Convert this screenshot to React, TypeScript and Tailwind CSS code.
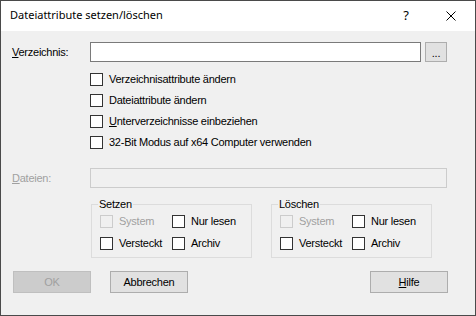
import React from 'react';

function Box({ disabled = false }: { disabled?: boolean }) {
  return (
    <span
      className={
        'inline-block w-[13px] h-[13px] shrink-0 border ' +
        (disabled ? 'border-[#cccccc] bg-[#f0f0f0]' : 'border-[#333333] bg-white')
      }
    />
  );
}

function Check({ label, disabled = false }: { label: React.ReactNode; disabled?: boolean }) {
  return (
    <div className="flex items-center h-[13px]">
      <Box disabled={disabled} />
      <span className={'ml-[6px] leading-none ' + (disabled ? 'text-[#a0a0a0]' : 'text-black')}>{label}</span>
    </div>
  );
}

function Gruppe({ title }: { title: string }) {
  return (
    <div className="relative w-[161px] h-[54px] border border-[#dcdcdc]">
      <span className="absolute -top-[8px] left-[6px] px-[1px] bg-[#f0f0f0] leading-[14px]">{title}</span>
      <div className="grid grid-cols-[72px_1fr] gap-y-[9px] pl-[8px] pt-[10px]">
        <Check label="System" disabled />
        <Check label="Nur lesen" />
        <Check label="Versteckt" />
        <Check label="Archiv" />
      </div>
    </div>
  );
}

export default function App() {
  return (
    <div className="w-[476px] h-[316px] border border-[#4a4a4a] bg-[#f0f0f0] flex flex-col text-[11px] tracking-[-0.25px] text-black font-['Liberation_Sans',Arial,sans-serif]">
      {/* Titelleiste */}
      <div className="h-[30px] bg-white flex items-center shrink-0 tracking-normal">
        <span className="pl-[9px] pb-[1px] text-[11px] font-['Noto_Sans',sans-serif]">Dateiattribute setzen/löschen</span>
        <span className="ml-auto mr-[37px] text-[13px] font-['Noto_Sans',sans-serif]">?</span>
        <svg width="10" height="10" viewBox="0 0 10 10" className="mr-[19px]">
          <path d="M0.5 0.5 L9.5 9.5 M9.5 0.5 L0.5 9.5" stroke="#000" strokeWidth="1" />
        </svg>
      </div>

      <div className="px-[11px] flex flex-col">
        <div className="flex items-center mt-[11px]">
          <span className="w-[78px]">
            <u>V</u>erzeichnis:
          </span>
          <div className="w-[331px] h-[20px] bg-white border border-[#7a7a7a]" />
          <button className="ml-[4px] w-[22px] h-[20px] bg-[#e1e1e1] border border-[#adadad] text-[11px] leading-none pb-[2px] flex items-end justify-center">
            ...
          </button>
        </div>

        <div className="pl-[78px] mt-[11px] flex flex-col gap-[8px]">
          <Check label="Verzeichnisattribute ändern" />
          <Check label="Dateiattribute ändern" />
          <Check
            label={
              <>
                <u>U</u>nterverzeichnisse einbeziehen
              </>
            }
          />
          <Check label="32-Bit Modus auf x64 Computer verwenden" />
        </div>

        <div className="flex items-center mt-[19px]">
          <span className="w-[78px] text-[#a0a0a0]">
            <u>D</u>ateien:
          </span>
          <div className="w-[357px] h-[20px] bg-[#f0f0f0] border border-[#cccccc]" />
        </div>

        <div className="flex gap-[19px] pl-[79px] mt-[16px]">
          <Gruppe title="Setzen" />
          <Gruppe title="Löschen" />
        </div>

        <div className="flex items-center mt-[13px] pl-[1px] pr-[16px]">
          <button className="w-[78px] h-[22px] bg-[#cccccc] border border-[#bfbfbf] text-[#a0a0a0]">OK</button>
          <button className="ml-[19px] w-[78px] h-[22px] bg-[#e1e1e1] border border-[#adadad]">Abbrechen</button>
          <button className="ml-auto w-[78px] h-[22px] bg-[#e1e1e1] border border-[#adadad]">
            <u>H</u>ilfe
          </button>
        </div>
      </div>
    </div>
  );
}
